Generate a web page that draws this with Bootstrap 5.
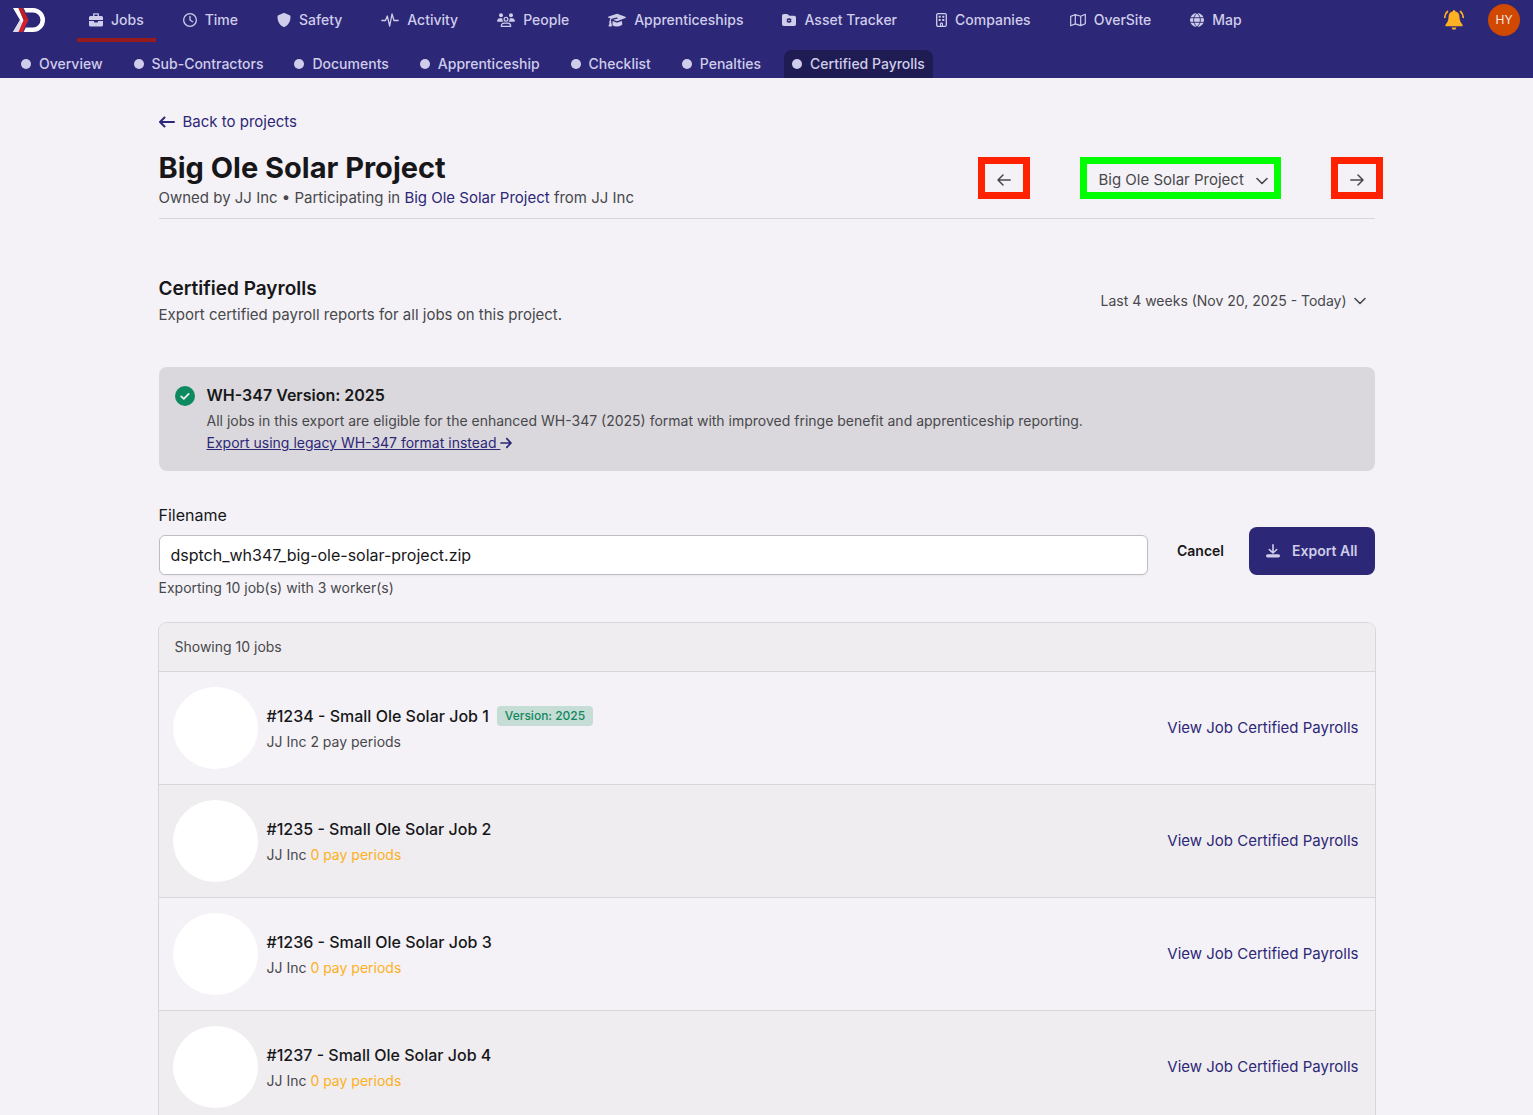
<!DOCTYPE html>
<html lang="en">
<head>
<meta charset="utf-8">
<meta name="viewport" content="width=device-width, initial-scale=1">
<title>Certified Payrolls</title>
<link href="https://cdn.jsdelivr.net/npm/bootstrap@5.3.0/dist/css/bootstrap.min.css" rel="stylesheet">
<style>
  :root { --ink: #17171a; --soft: #48484c; --brand: #2d2777; --line: #d8d6da; }
  body { font-family: Inter, sans-serif; font-size: 15px; line-height: 24px; background: #f4f2f6; color: var(--soft); }
  a { color: var(--brand); text-decoration: none; }
  h1, h2, h3 { color: var(--ink); margin: 0; }
  .text-14 { font-size: 14px; line-height: 20px; }

  .topbar { background: var(--brand); font-size: 14px; line-height: 20px; font-weight: 500; }
  .topbar a { color: #cfcdea; white-space: nowrap; display: flex; align-items: center; gap: 8px; }
  .topbar-main { padding-right: 13px; }
  .brand-link { width: 33px; margin-right: 32px; }
  .main-links, .sub-links { gap: 15px; }
  .main-links a { padding: 10px 12px 8px; border-bottom: 4px solid transparent; }
  .main-links a.active { border-color: #961b1e; }
  .main-links svg { height: 14px; fill: currentColor; }
  .sub-links { padding: 8px 13px 0; }
  .sub-links a { padding: 4px 8px; border-radius: 8px 8px 0 0; }
  .sub-links a.active { background: #1f1b53; }
  .dot { width: 10px; height: 10px; border-radius: 50%; background: currentColor; }
  .user-chip { width: 32px; height: 32px; border: 0; border-radius: 50%; background: #d14900; color: #f4e8e4; font-size: 12px; padding: 0; }
  .icon-btn { border: 0; background: none; padding: 0; line-height: 0; }

  .page-col { max-width: 1280px; padding: 32px 32px 0; }
  .project-head { padding-bottom: 8px; border-bottom: 1px solid var(--line); margin: 16px 0 56px; }
  .project-head h1 { font-size: 29px; line-height: 36px; font-weight: 700; }
  .switcher { gap: 50px; margin: 0 -8px 4px 0; }
  .frame-red, .frame-green { background: none; color: var(--soft); border: 7px solid #ff2200; height: 42px; padding: 4px 14px 0 12px; line-height: 0; }
  .frame-red { width: 52px; }
  .frame-green { border-color: #00ff00; line-height: 24px; }
  .pick { appearance: none; color: var(--soft); background: no-repeat right 6px center / 12px 12px url("data:image/svg+xml,%3Csvg xmlns='http://www.w3.org/2000/svg' viewBox='0 0 12 12'%3E%3Cpath d='M1 3.5l5 5 5-5' fill='none' stroke='%2348484c' stroke-width='1.6' stroke-linecap='round' stroke-linejoin='round'/%3E%3C/svg%3E"); border-radius: 0; }
  .pick.frame-green { padding: 4px 29px 0 12px; background-position: right 6px top 11px; }
  .pick-dates { border: 0; padding: 0 27px 0 0; background-position: right 9px center; }
  .section-head h2 { font-size: 19px; line-height: 28px; font-weight: 600; }

  .notice { background: #dad8dc; border-radius: 8px; padding: 16px; gap: 12px; margin: 40px 0 32px; }
  .notice h3 { font-size: 16px; line-height: 24px; font-weight: 600; }
  .notice > svg { margin-top: 3px; }
  .notice-link { line-height: 24px; }
  .notice-link svg { vertical-align: -1px; }

  .export-form label { color: var(--ink); font-size: 16px; }
  .file-box { height: 40px; padding: 7px 11px; border: 1px solid #bfbdc2; border-radius: 6px; color: var(--ink); font-size: 16px; background: #fff; box-shadow: 0 1px 2px rgba(0,0,0,.05); }
  .export-note { padding-top: 3px; }
  .action-btn { height: 48px; padding: 0 17px; border: 0; border-radius: 8px; font-size: 14px; font-weight: 600; line-height: 20px; color: var(--ink); }
  .action-btn.filled, .action-btn.filled:hover { background: var(--brand); color: #cfcdea; }

  .job-list { box-shadow: 0 0 0 1px var(--line); border-radius: 8px 8px 0 0; margin-top: 25px; overflow: hidden; }
  .job-list-head { background: #efedf0; padding: 14px 16px; }
  .job-row { border-top: 1px solid var(--line); padding: 15px 16px 15px 14px; gap: 9px; }
  .job-row:nth-child(odd) { background: #efedf0; }
  .job-photo { width: 85px; height: 82px; border-radius: 50%; background: #fff; }
  .job-row h3 { font-size: 16px; line-height: 24px; font-weight: 500; }
  .tag-2025 { background: #c5ddd5; color: #12875f; font-size: 12px; line-height: 16px; font-weight: 500; padding: 2px 8px; border-radius: 4px; }
  .none-yet { color: #fdb022; }
</style>
</head>
<body>
<header class="topbar">
  <div class="topbar-main d-flex align-items-start">
    <a class="brand-link ms-2 mt-2" href="#" aria-label="Home">
      <svg class="flex-shrink-0 ms-1" width="34" height="24" viewBox="0 0 34 24">
        <path d="M1 0h6l7 12-7 12H1l7-12z" fill="#fff"/>
        <path d="M4.500 18L8 12l3 5-4 7H1z" fill="#dcd9ea"/>
        <path d="M6.500 0h4l6 12-6 12h-4l5-12z" fill="#d3202b"/>
        <path d="M6.500 0h4l6 12h-5z" fill="#b9202c"/>
        <path d="M11.500 0H21a12 12 0 0 1 0 24h-9.500l2.300-4.500H21a7.500 7.500 0 0 0 0-15h-7.200z" fill="#fff"/>
      </svg>
    </a>
    <nav class="main-links d-flex flex-grow-1 ms-1" aria-label="Main">
      <a class="active" href="#"><svg width="14" viewBox="0 0 14 14"><path fill-rule="evenodd" d="M4 3V1.500Q4 .3 5.200.3h3.600Q10 .3 10 1.500V3h2.500Q14 3 14 4.500V7H0V4.500Q0 3 1.500 3zM5.300 3h3.400V1.600H5.300zM0 8h5v.8q0 .7.700.7h2.600q.7 0 .7-.7V8h5v4q0 1.500-1.500 1.500h-11Q0 13.500 0 12z"/></svg>Jobs</a>
      <a href="#"><svg width="14" viewBox="0 0 512 512"><path d="M464 256A208 208 0 1 1 48 256a208 208 0 1 1 416 0zM0 256a256 256 0 1 0 512 0A256 256 0 1 0 0 256zM232 120V256c0 8 4 15.500 10.700 20l96 64c11 7.400 25.900 4.400 33.300-6.700s4.400-25.900-6.700-33.300L280 243.200V120c0-13.300-10.700-24-24-24s-24 10.700-24 24z"/></svg>Time</a>
      <a href="#"><svg width="14" viewBox="0 0 14 14"><path d="M7 0q.3 0 .5.100l5.100 2.200q.9.400.9 1.400c0 4-1.600 8.200-5.700 10.100q-.8.400-1.600 0C2.100 11.900.5 7.700.5 3.700q0-1 .9-1.400L6.500.1Q6.700 0 7 0z"/></svg>Safety</a>
      <a href="#"><svg width="18" viewBox="0 0 18 14"><path d="M.8 7.500h3.700L6.300 3l2.400 10L11 1l2 6.500h4.200" fill="none" stroke="currentColor" stroke-width="1.300" stroke-linecap="round" stroke-linejoin="round"/></svg>Activity</a>
      <a href="#"><svg width="18" viewBox="0 0 18 14"><circle cx="4" cy="2.200" r="2"/><circle cx="14" cy="2.200" r="2"/><path d="M.2 8.300Q.2 5.300 3 5.300h1.400q.6 0 1 .2-.4 2 1 3.300H.7q-.5 0-.5-.5zM17.800 8.300q0-3-2.800-3h-1.400q-.6 0-1 .2.400 2-1 3.300h5.700q.5 0 .5-.5z"/><circle cx="9" cy="6.300" r="1.900" fill="none" stroke="currentColor" stroke-width="1.200"/><path d="M4.300 13.400q0-3.300 3-3.300h3.400q3 0 3 3.300z" fill="none" stroke="currentColor" stroke-width="1.200" stroke-linejoin="round"/></svg>People</a>
      <a href="#"><svg width="18" viewBox="0 0 18 14"><path d="M9 .8q.4 0 .8.200l7.500 2.700q.6.200.6.700t-.6.700L9.800 7.900Q9 8.200 8.200 7.900L5 6.700l4.200-.9q.6-.2.500-.7t-.7-.5l-4.600 1Q3 6 2.700 7.400q.9.500.5 1.500l.7 3.900q0 .5-.5.600l-2.300.1q-.7 0-.5-.7.900-1.700.8-3.900-.5-1 .4-1.500 0-1.400.7-2.300L.7 4.900Q.1 4.700.1 4.300t.6-.7L8.200 1q.4-.2.800-.2zM4.600 8l3.200 1.200q1.200.4 2.400 0L13.900 8l.4 3.200q-.2 1.600-5.300 2.300-2.900-.1-4.600-1.300z"/></svg>Apprenticeships</a>
      <a href="#"><svg width="14" viewBox="0 0 14 14"><path fill-rule="evenodd" d="M1.800 1h3q.7 0 1.200.5l.8.800q.4.400 1 .4h4.400Q14 2.700 14 4.500v6.700q0 1.800-1.800 1.800H1.800Q0 13 0 11.200V2.800Q0 1 1.800 1zM6.300 5v1.100l-1-.5-.8 1.300.9.600-.9.700.8 1.300 1-.6V10h1.500V8.900l1 .6.800-1.300-.9-.7.900-.6-.8-1.300-1 .5V5z"/><circle cx="7" cy="7.500" r=".8"/></svg>Asset Tracker</a>
      <a href="#"><svg width="11" viewBox="0 0 11 14"><rect x=".7" y=".7" width="9.600" height="12.600" rx="1.300" fill="none" stroke="currentColor" stroke-width="1.300"/><path d="M2.700 2.700h2v2h-2zm3.600 0h2v2h-2zM2.700 6h2v2h-2zm3.600 0h2v2h-2zM4 13.500V11q0-1.400 1.500-1.400T7 11v2.500H5.900V11h-.8v2.500z"/></svg>Companies</a>
      <a href="#"><svg width="16" viewBox="0 0 16 14"><path d="M.7 3.400l4.600-1.900 5.400 1.700 4.600-1.900v9.400l-4.600 1.900-5.400-1.700L.7 12.700zM5.300 1.500v9.400M10.700 3.200v9.400" fill="none" stroke="currentColor" stroke-width="1.200" stroke-linejoin="round"/></svg>OverSite</a>
      <a href="#"><svg width="14" viewBox="0 0 14 14"><circle cx="7" cy="7" r="7"/><path d="M0 4.700h14M0 9.300h14M7 0C2.500 4 2.500 10 7 14c4.500-4 4.500-10 0-14" fill="none" stroke="#2d2777" stroke-width=".9"/></svg>Map</a>
    </nav>
    <div class="d-flex align-items-center gap-4 pt-1">
      <button class="icon-btn" type="button" aria-label="Notifications">
        <svg width="20" height="20" viewBox="0 0 20 20" fill="#fdb022"><path d="M10 0q1.100 0 1.100 1.300 4.100 1 4.300 5.300.1 5 2.600 7.300.9 1.100.6 1.800-.2.600-1 .6H2.400q-.8 0-1-.6-.3-.7.600-1.800Q4.500 11.600 4.600 6.600 4.800 2.300 8.900 1.300 8.900 0 10 0zM7.600 17.600h4.800q-.3 2.200-2.400 2.200t-2.400-2.200z"/><path d="M3.500 1.500Q.9 3.700.8 7.500M16.500 1.500q2.600 2.200 2.700 6" fill="none" stroke="#fdb022" stroke-width="1.700" stroke-linecap="round"/></svg>
      </button>
      <button class="user-chip" type="button">HY</button>
    </div>
  </div>
  <nav class="sub-links d-flex" aria-label="Jobs">
    <a href="#"><span class="dot"></span>Overview</a>
    <a href="#"><span class="dot"></span>Sub-Contractors</a>
    <a href="#"><span class="dot"></span>Documents</a>
    <a href="#"><span class="dot"></span>Apprenticeship</a>
    <a href="#"><span class="dot"></span>Checklist</a>
    <a href="#"><span class="dot"></span>Penalties</a>
    <a class="active" href="#"><span class="dot"></span>Certified Payrolls</a>
  </nav>
</header>

<main class="page-col mx-auto">
  <div class="d-flex">
    <a class="d-flex align-items-center gap-2" href="#">
      <svg width="16" height="12" viewBox="0 0 16 12" fill="none" stroke="currentColor" stroke-width="2" stroke-linecap="round" stroke-linejoin="round"><path d="M15 6H1.200M5.500 1.500L1 6l4.500 4.500"/></svg>Back to projects</a>
  </div>

  <div class="project-head d-flex justify-content-between align-items-center">
    <div>
      <h1>Big Ole Solar Project</h1>
      <div>Owned by JJ Inc • Participating in <a href="#">Big Ole Solar Project</a> from JJ Inc</div>
    </div>
    <div class="switcher d-flex">
      <button class="frame-red" type="button" aria-label="Previous project"><svg width="14" height="12" viewBox="0 0 14 12" fill="none" stroke="currentColor" stroke-width="1.500" stroke-linecap="round" stroke-linejoin="round"><path d="M13.200 6H1M6 1L1 6l5 5"/></svg></button>
      <select class="pick frame-green" aria-label="Project"><option>Big Ole Solar Project</option></select>
      <button class="frame-red" type="button" aria-label="Next project"><svg width="14" height="12" viewBox="0 0 14 12" fill="none" stroke="currentColor" stroke-width="1.500" stroke-linecap="round" stroke-linejoin="round"><path d="M.8 6H13M8 1l5 5-5 5"/></svg></button>
    </div>
  </div>

  <div class="section-head d-flex justify-content-between align-items-center">
    <div>
      <h2>Certified Payrolls</h2>
      <div>Export certified payroll reports for all jobs on this project.</div>
    </div>
    <select class="pick pick-dates text-14" aria-label="Date range"><option>Last 4 weeks (Nov 20, 2025 - Today)</option></select>
  </div>

  <section class="notice d-flex align-items-start">
    <svg class="flex-shrink-0" width="20" height="20" viewBox="0 0 20 20"><circle cx="10" cy="10" r="10" fill="#0e8a60"/><path d="M6.200 10.400l2.600 2.500 4.900-5" fill="none" stroke="#e6efec" stroke-width="1.800" stroke-linecap="round" stroke-linejoin="round"/></svg>
    <div>
      <h3>WH-347 Version: 2025</h3>
      <p class="text-14 mt-1 mb-0">All jobs in this export are eligible for the enhanced WH-347 (2025) format with improved fringe benefit and apprenticeship reporting.</p>
      <div class="text-14 notice-link"><a class="text-decoration-underline" href="#">Export using legacy WH-347 format instead <svg width="12" height="12" viewBox="0 0 12 12" fill="none" stroke="currentColor" stroke-width="1.700" stroke-linecap="round" stroke-linejoin="round"><path d="M1 6h10M6.800 1.700L11 6l-4.200 4.300"/></svg></a></div>
    </div>
  </section>

  <form class="export-form">
    <div class="d-flex align-items-end">
      <div class="flex-grow-1 me-2 pe-1">
        <label class="d-block mb-2" for="filename">Filename</label>
        <input class="file-box d-block w-100" id="filename" type="text" value="dsptch_wh347_big-ole-solar-project.zip">
      </div>
      <button class="btn action-btn me-2" type="button">Cancel</button>
      <button class="btn action-btn filled d-flex align-items-center" type="submit"><svg class="me-2" width="18" height="14" viewBox="0 0 18 14" fill="none" stroke="currentColor" stroke-linecap="round" stroke-linejoin="round"><path d="M7 .8v7.700M3.300 5.500L7 9l3.700-3.500" stroke-width="1.600"/><path d="M1.600 11.800h10.800" stroke-width="3.200"/></svg>Export All</button>
    </div>
    <div class="text-14 export-note">Exporting 10 job(s) with 3 worker(s)</div>
  </form>

  <section class="job-list">
    <div class="job-list-head text-14">Showing 10 jobs</div>
    <article class="job-row d-flex align-items-center">
      <div class="job-photo"></div>
      <div class="flex-grow-1">
        <h3 class="d-flex align-items-center gap-2">#1234 - Small Ole Solar Job 1 <span class="tag-2025">Version: 2025</span></h3>
        <div class="text-14 mt-1">JJ Inc 2 pay periods</div>
      </div>
      <a href="#">View Job Certified Payrolls</a>
    </article>
    <article class="job-row d-flex align-items-center">
      <div class="job-photo"></div>
      <div class="flex-grow-1">
        <h3>#1235 - Small Ole Solar Job 2</h3>
        <div class="text-14 mt-1">JJ Inc <span class="none-yet">0 pay periods</span></div>
      </div>
      <a href="#">View Job Certified Payrolls</a>
    </article>
    <article class="job-row d-flex align-items-center">
      <div class="job-photo"></div>
      <div class="flex-grow-1">
        <h3>#1236 - Small Ole Solar Job 3</h3>
        <div class="text-14 mt-1">JJ Inc <span class="none-yet">0 pay periods</span></div>
      </div>
      <a href="#">View Job Certified Payrolls</a>
    </article>
    <article class="job-row d-flex align-items-center">
      <div class="job-photo"></div>
      <div class="flex-grow-1">
        <h3>#1237 - Small Ole Solar Job 4</h3>
        <div class="text-14 mt-1">JJ Inc <span class="none-yet">0 pay periods</span></div>
      </div>
      <a href="#">View Job Certified Payrolls</a>
    </article>
  </section>
</main>
<script src="https://cdn.jsdelivr.net/npm/bootstrap@5.3.0/dist/js/bootstrap.bundle.min.js"></script>
</body>
</html>
